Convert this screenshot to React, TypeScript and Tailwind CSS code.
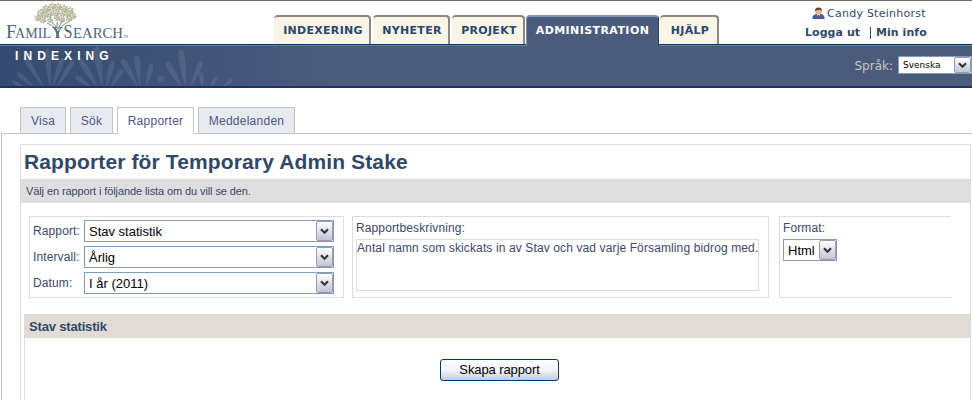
import { ReactNode } from "react"

const navItems = [
  { label: "INDEXERING", style: "w-[97px]" },
  { label: "NYHETER", style: "w-[77px]" },
  { label: "PROJEKT", style: "w-[73px]" },
  { label: "ADMINISTRATION", style: "w-[133px]", active: true },
  { label: "HJÄLP", style: "w-[59px]" },
]

const tabs = [
  { label: "Visa", style: "w-[46px]" },
  { label: "Sök", style: "w-[43px]" },
  { label: "Rapporter", style: "w-[77px]", active: true },
  { label: "Meddelanden", style: "w-[97px]" },
]

const filters = [
  { label: "Rapport:", value: "Stav statistik" },
  { label: "Intervall:", value: "Årlig" },
  { label: "Datum:", value: "I år (2011)" },
]

// x, y and radius of every clump in the crown of the tree
const clumps = [
  [38, 18, 2.5], [41, 13, 3], [46, 9, 3], [52, 7, 3], [58, 7, 3], [64, 9, 3],
  [70, 11, 3], [73, 16, 2.6], [69, 19, 2.4], [63, 14, 2.6], [56, 13, 3], [49, 14, 3],
  [43, 20, 2.6], [50, 20, 2], [62, 20, 2.2], [57, 18, 2.2], [67, 14, 2.4], [45, 15, 2.4],
]

// x, y, rotation, length and half width of every leaf in the banner
const leaves = [
  [50, 44, -4, 40, 4], [44, 44, -32, 38, 3.5], [34, 43, -50, 22, 3.2], [24, 44, -58, 14, 2.4],
  [52, 44, 20, 32, 3.5], [56, 44, 33, 33, 3.5], [102, 42, -8, 40, 5], [98, 44, -32, 34, 4],
  [92, 44, -55, 20, 3], [106, 44, 14, 28, 3.5], [110, 44, 34, 22, 3], [138, 43, -30, 32, 4],
  [140, 43, -6, 32, 4], [146, 43, 14, 24, 3.5], [182, 44, -30, 30, 4], [186, 44, -8, 39, 4.5],
  [190, 44, 24, 30, 3.5], [203, 44, -8, 16, 3], [210, 44, 32, 13, 2.5], [222, 44, 50, 14, 2.5],
]

export default function App() {
  return (
    <div className="flex h-[400px] w-[972px] flex-col overflow-hidden bg-white font-['Liberation_Sans',sans-serif] text-[13px] text-[#3d4767]">
      <Header />
      <Banner />
      <TabBar />
      <main className="ml-px flex-1 border-l border-[#c4c4c4] pt-[10px] pl-[18px]">
        <div className="h-full w-[951px] border-x border-t border-[#dcdcdc]">
          <h1 className="h-[34px] pl-[3px] text-[21px] leading-[34px] font-bold tracking-[0.13px] whitespace-nowrap text-[#304868]">
            Rapporter för Temporary Admin Stake
          </h1>
          <p className="h-6 bg-[#dedede] pl-[5px] text-[11px] leading-6 tracking-[-0.1px]">
            Välj en rapport i följande lista om du vill se den.
          </p>
          <ReportForm />
          <section className="ml-[3px] h-[90px] border-l border-[#dcdcdc]">
            <h2 className="-ml-px h-6 bg-[#e0dbd4] pl-[5px] text-[13px] leading-[25px] font-bold tracking-[-0.17px] text-[#304868]">
              Stav statistik
            </h2>
            <div className="pt-[21px] pl-[415px]">
              <button className="block h-[22px] w-[119px] rounded-[3px] border border-[#003c74] bg-gradient-to-b from-white via-[#f4f4fb] to-[#c9c8dc] text-[13px] leading-5 tracking-[-0.1px] text-black">
                Skapa rapport
              </button>
            </div>
          </section>
        </div>
      </main>
    </div>
  )
}

const Header = () => {
  return (
    <header className="flex h-[44px] shrink-0 border-t border-[#736f63] font-['DejaVu_Sans',sans-serif]">
      <div className="w-[274px]">
        <Logo />
      </div>
      <nav className="flex w-[531px] items-end gap-[2px] pt-[14px]">
        {navItems.map((item) => (
          <a
            key={item.label}
            className={`block h-[29px] shrink-0 rounded-t-[4px] text-center text-[11px] font-bold whitespace-nowrap ${item.style} ${
              item.active
                ? "relative -mr-px -mb-[2px] -ml-px h-[31px] border-t-2 border-r border-l border-t-[#8793ad] border-r-[#263b60] border-l-[#8793ad] bg-[#4b5b7c] leading-[27px] tracking-[0.42px] text-white"
                : "border-t-2 border-r-2 border-t-[#8b887f] border-r-[#8b887f] bg-[#f8f4e8] pl-[3px] leading-[27px] tracking-[0.3px] text-[#2b466b]"
            }`}
          >
            {item.label}
          </a>
        ))}
      </nav>
      <div className="pt-[5px] text-[#304868]">
        <div className="flex h-[15px] items-center pl-[7px] text-[11px] tracking-[0.25px] whitespace-nowrap">
          <UserIcon />
          <span className="ml-[2px] pt-px">Candy Steinhorst</span>
        </div>
        <div className="mt-[5px] flex h-[14px] items-center text-[11px] font-bold tracking-[0.06px] whitespace-nowrap">
          <a className="w-[65px]">Logga ut</a>
          <a className="border-l border-[#304868] pl-[5px] leading-3">Min info</a>
        </div>
      </div>
    </header>
  )
}

const Banner = () => {
  return (
    <div className="flex h-[44px] shrink-0 justify-between border-t border-b-2 border-t-[#003a70] border-b-[#1d3465] bg-gradient-to-r from-[#344b6f] to-[#4b5b7c] to-[35%] font-['DejaVu_Sans',sans-serif]">
      <div className="relative w-[240px] border-t border-[#6582a4]">
        <svg className="absolute top-0 left-0" width="240" height="40" viewBox="0 2 240 40">
          <g fill="#7885a3" opacity="0.3">
            {leaves.map(([x, y, angle, length, width], i) => (
              <path
                key={i}
                d={`M0 0C${-width * 0.6} ${-length * 0.4} ${-width * 1.3} ${-length} 0 ${-length}C${width * 1.3} ${-length} ${width * 0.6} ${-length * 0.4} 0 0`}
                transform={`translate(${x} ${y}) rotate(${angle})`}
              />
            ))}
            <circle cx="161" cy="35" r="3" />
          </g>
        </svg>
        <span className="relative block pl-[15px] font-['Liberation_Sans',sans-serif] text-[12px] leading-[20px] font-bold tracking-[5.1px] text-white">
          INDEXING
        </span>
      </div>
      <div className="flex flex-1 justify-end border-t border-[#6582a4] pt-[10px] text-[#c5c5c5]">
        <span className="mr-[5px] text-[12px] leading-5">Språk:</span>
        <Select value="Svenska" style="h-[18px] w-[74px] pl-1 text-[9px]" />
      </div>
    </div>
  )
}

const TabBar = () => {
  return (
    <div className="flex h-[46px] shrink-0 items-end pt-[19px]">
      <div className="ml-px h-px w-[19px] bg-[#c4c4c4]" />
      {tabs.map((tab) => (
        <div key={tab.label} className="flex items-end">
          <a
            className={`block h-[27px] border border-[#c4c4c4] text-center text-[12px] leading-[26px] tracking-[0.25px] text-[#4d5684] ${tab.style} ${
              tab.active ? "border-b-white bg-white" : "bg-[#e7eaef]"
            }`}
          >
            {tab.label}
          </a>
          <div className="h-px w-1 bg-[#c4c4c4]" />
        </div>
      ))}
      <div className="h-px flex-1 bg-[#c4c4c4]" />
    </div>
  )
}

const ReportForm = () => {
  return (
    <div className="flex h-[111px] pt-[13px] pl-2 text-[12px] tracking-[0.12px]">
      <Box style="w-[315px] pt-[3px] pl-[3px]">
        {filters.map((filter) => (
          <div key={filter.label} className="mb-1 flex h-[22px]">
            <label className="w-[51px] leading-[22px] whitespace-nowrap">{filter.label}</label>
            <Select value={filter.value} style="h-[22px] w-[250px] pl-1 text-[13px]" />
          </div>
        ))}
      </Box>
      <Box style="ml-2 w-[417px] pl-[3px]">
        <label className="block h-[22px] leading-[22px]">Rapportbeskrivning:</label>
        <div className="h-[52px] w-[403px] border border-[#dcdcdc] leading-[16px] whitespace-nowrap">
          Antal namn som skickats in av Stav och vad varje Församling bidrog med.
        </div>
      </Box>
      <Box style="ml-[10px] w-[172px] border-r-0 pl-[3px]">
        <label className="block h-[22px] leading-[22px]">Format:</label>
        <Select value="Html" style="h-[22px] w-[54px] pl-1 text-[13px]" />
      </Box>
    </div>
  )
}

const Box = ({ style, children }: { style: string; children: ReactNode }) => {
  return <div className={`h-[82px] shrink-0 border border-[#dcdcdc] ${style}`}>{children}</div>
}

const Select = ({ value, style }: { value: string; style: string }) => {
  return (
    <div className={`flex shrink-0 items-center justify-between border border-[#7f9db9] bg-white tracking-normal text-black ${style}`}>
      <span className="pt-px whitespace-nowrap">{value}</span>
      <span className="flex h-full w-[17px] shrink-0 items-center justify-center rounded-[2px] border border-[#9a9aab] bg-gradient-to-b from-white to-[#c3c3d5]">
        <svg width="9" height="7" viewBox="0 0 9 7" fill="none">
          <path d="M1 1.2L4.5 4.7L8 1.2" stroke="#333740" strokeWidth="2.2" />
        </svg>
      </span>
    </div>
  )
}

const Logo = () => {
  return (
    <svg width="135" height="43" viewBox="0 1 135 43">
      <g fill="none" stroke="#b3b597" strokeWidth="1.8" strokeDasharray="1.8 0.8">
        {clumps.map(([x, y, r], i) => (
          <g key={i}>
            <circle cx={x} cy={y} r={r} fill="#ebebdf" />
            <circle cx={x + 0.5} cy={y + 0.5} r={r * 0.4} />
          </g>
        ))}
      </g>
      <path
        d="M57 30L57 22M58 32C59 28 63 25 68 22M57 31C56 28 53 26 47 23M57 28L52 22M58 29L62 21"
        fill="none"
        stroke="#7c8b88"
        strokeWidth="1"
      />
      <path d="M57.5 38V31" stroke="#4a667b" strokeWidth="2.4" />
      <g fill="#4a667b" fontFamily="Liberation Serif, serif">
        <text x="6" y="38" fontSize="19">F</text>
        <text x="15" y="38" fontSize="15" textLength="36" lengthAdjust="spacingAndGlyphs">AMIL</text>
        <text x="52" y="38" fontSize="17" textLength="11" lengthAdjust="spacingAndGlyphs">Y</text>
        <text x="63.5" y="38" fontSize="18" textLength="9" lengthAdjust="spacingAndGlyphs">S</text>
        <text x="73" y="38" fontSize="15" textLength="50" lengthAdjust="spacingAndGlyphs">EARCH</text>
        <text x="123.5" y="38" fontSize="3">TM</text>
      </g>
    </svg>
  )
}

const UserIcon = () => {
  return (
    <svg width="13" height="13" viewBox="0 0 13 13">
      <path d="M0.5 12V10Q1 7.5 4 7H9Q12 7.5 12.5 10V12Z" fill="#3f5da0" />
      <path d="M5 7L6.5 11L8 7Z" fill="#fff" />
      <path d="M6.5 8V12" stroke="#c22d35" />
      <circle cx="6.5" cy="4.3" r="3.2" fill="#e8b08c" />
      <path d="M3 4.5Q2.8 0.7 6.5 0.5Q10.2 0.7 10 4.5L9 3H5Z" fill="#6e3c2c" />
    </svg>
  )
}
